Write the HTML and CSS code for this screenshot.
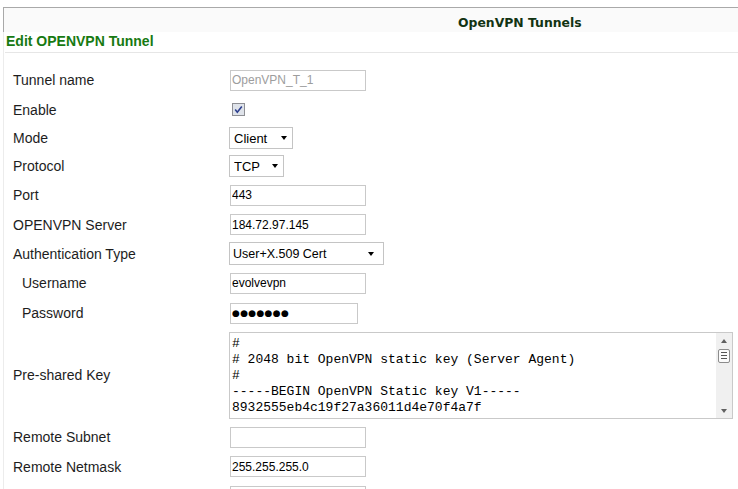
FILE: index.html
```html
<!DOCTYPE html>
<html>
<head>
<meta charset="utf-8">
<link rel="stylesheet" href="styles.css">
</head>
<body>
<div class="page">
  <div class="topbar"><span class="title">OpenVPN Tunnels</span></div>
  <div class="section">Edit OPENVPN Tunnel</div>
  <div class="form">
    <div class="lbl">Tunnel name</div>
    <div class="ctl"><input class="txt disabled" type="text" value="OpenVPN_T_1" disabled></div>

    <div class="lbl">Enable</div>
    <div class="ctl"><span class="check"><svg width="13" height="13" viewBox="0 0 13 13"><rect x="0.5" y="0.5" width="12" height="12" fill="#dfe3ea" stroke="#8e8f94"/><path d="M3.2 6.6 L5.3 9.2 L9.8 3.4" fill="none" stroke="#2d3f8f" stroke-width="1.6"/></svg></span></div>

    <div class="lbl">Mode</div>
    <div class="ctl"><span class="sel w-mode"><select><option>Client</option></select></span></div>

    <div class="lbl">Protocol</div>
    <div class="ctl"><span class="sel w-proto"><select><option>TCP</option></select></span></div>

    <div class="lbl">Port</div>
    <div class="ctl"><input class="txt" type="text" value="443"></div>

    <div class="lbl">OPENVPN Server</div>
    <div class="ctl"><input class="txt" type="text" value="184.72.97.145"></div>

    <div class="lbl">Authentication Type</div>
    <div class="ctl"><span class="sel w-auth"><select><option>User+X.509 Cert</option></select></span></div>

    <div class="lbl sub">Username</div>
    <div class="ctl"><input class="txt" type="text" value="evolvevpn"></div>

    <div class="lbl sub">Password</div>
    <div class="ctl"><input class="txt pw" type="text" value="●●●●●●●"></div>

    <div class="lbl">Pre-shared Key</div>
    <div class="ctl">
      <div class="textarea">
        <div class="ta-text">#
# 2048 bit OpenVPN static key (Server Agent)
#
-----BEGIN OpenVPN Static key V1-----
8932555eb4c19f27a36011d4e70f4a7f</div>
        <div class="ta-scroll">
          <span class="arr up"></span>
          <span class="thumb"><i></i><i></i><i></i></span>
          <span class="spacer"></span>
          <span class="arr down"></span>
        </div>
      </div>
    </div>

    <div class="lbl">Remote Subnet</div>
    <div class="ctl"><input class="txt" type="text" value=""></div>

    <div class="lbl">Remote Netmask</div>
    <div class="ctl"><input class="txt" type="text" value="255.255.255.0"></div>

    <div class="lbl"></div>
    <div class="ctl"><input class="txt" type="text" value=""></div>
  </div>
</div>
</body>
</html>
```

FILE: styles.css
```css
html, body {
  margin: 0;
  padding: 0;
  background: #ffffff;
  overflow: hidden;
}
body {
  font-family: "Liberation Sans", Arial, sans-serif;
  color: #222;
}
.page {
  margin: 7px 0 0 3px;
  border-left: 1px solid #ececec;
  min-height: 482px;
}
.topbar {
  margin-left: -1px;
  border-top: 1px solid #a9a9a9;
  border-left: 1px solid #a9a9a9;
  height: 25px;
  background: #fafafa;
  padding-left: 454px;
  box-sizing: border-box;
  padding-top: 5px;
}
.title {
  font-family: "DejaVu Sans", Verdana, sans-serif;
  font-weight: bold;
  font-size: 12.4px;
  line-height: 20px;
  color: #123312;
}
.section {
  margin-left: 1px;
  height: 20px;
  line-height: 19px;
  padding-left: 1px;
  border-bottom: 1px solid #e6e6e6;
  font-weight: bold;
  font-size: 14px;
  color: #177a12;
}
.form {
  display: grid;
  grid-template-columns: 217px 1fr;
  grid-template-rows: 30px 29px 28px 28px 30px 29px 29px 30px 30px 94px 30px 29px 30px;
  padding: 12px 0 0 9px;
}
.lbl {
  display: flex;
  align-items: center;
  font-size: 14px;
  color: #1d1d1d;
}
.lbl.sub {
  padding-left: 9px;
}
.ctl {
  display: flex;
  align-items: center;
}
.txt {
  box-sizing: border-box;
  width: 136px;
  height: 21px;
  margin: 0;
  padding: 0 1px;
  border: 1px solid #c9c9c9;
  background: #fff;
  font-family: "Liberation Sans", Arial, sans-serif;
  font-size: 12px;
  color: #000;
  outline: none;
}
.txt.disabled {
  color: #9d9d9d;
  background: #fff;
}
.txt.pw {
  width: 128px;
  font-family: "DejaVu Sans", sans-serif;
  font-size: 9px;
  letter-spacing: 0.3px;
}
.check {
  display: inline-flex;
  margin-left: 2px;
}
.sel {
  position: relative;
  display: inline-flex;
  margin-left: -1px;
}
.sel select {
  -webkit-appearance: none;
  appearance: none;
  box-sizing: border-box;
  width: 100%;
  height: 22px;
  margin: 0;
  padding: 0 0 0 4px;
  border: 1px solid #c4c4c4;
  border-radius: 0;
  background: #fff;
  font-family: "Liberation Sans", Arial, sans-serif;
  font-size: 13px;
  color: #000;
  outline: none;
}
.sel::after {
  content: "";
  position: absolute;
  right: 6px;
  top: 9px;
  border-left: 3.5px solid transparent;
  border-right: 3.5px solid transparent;
  border-top: 4px solid #000;
}
.w-mode { width: 64px; }
.w-proto { width: 55px; }
.w-auth { width: 155px; }
.w-auth select { height: 23px; padding-left: 3px; font-size: 12.5px; }
.w-auth::after { top: 10px; right: 10px; }
.textarea {
  box-sizing: border-box;
  width: 504px;
  height: 87px;
  margin-left: -1px;
  border: 1px solid #c9c9c9;
  display: flex;
  background: #fff;
}
.ta-text {
  flex: 1;
  overflow: hidden;
  white-space: pre;
  font-family: "Liberation Mono", "Courier New", monospace;
  font-size: 13px;
  line-height: 16px;
  padding: 3px 0 0 2px;
  color: #000;
}
.ta-scroll {
  width: 16px;
  background: #f0f0f0;
  display: flex;
  flex-direction: column;
  align-items: center;
  padding: 6px 0 5px;
  box-sizing: border-box;
}
.arr {
  width: 0;
  height: 0;
  border-left: 3px solid transparent;
  border-right: 3px solid transparent;
}
.arr.up { border-bottom: 4px solid #606060; }
.arr.down { border-top: 4px solid #606060; }
.thumb {
  margin-top: 6px;
  box-sizing: border-box;
  width: 12px;
  height: 14px;
  border: 1px solid #8c8c8c;
  border-radius: 2px;
  background: #fbfbfb;
  display: flex;
  flex-direction: column;
  justify-content: center;
  align-items: center;
  gap: 2px;
}
.thumb i {
  display: block;
  width: 6px;
  height: 1px;
  background: #555;
}
.spacer { flex: 1; }
```
